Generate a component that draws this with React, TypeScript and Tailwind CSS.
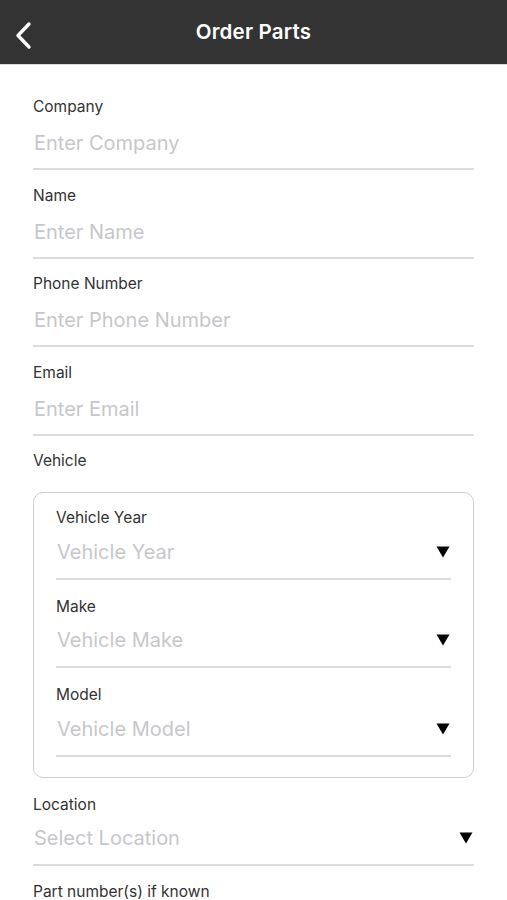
import { ReactNode } from "react";

const font = { fontFamily: "Inter, 'Noto Sans', sans-serif" };

export default function App() {
  return (
    <div className="min-h-[900px] w-full bg-white" style={font}>
      <header className="relative flex h-[65px] items-center justify-center border-b border-[#d9d9d9] bg-[#333333]">
        <button className="absolute left-[10px] top-[17px] p-1" aria-label="Back">
          <svg width="20" height="30" viewBox="0 0 20 30" fill="none">
            <path
              d="M15 3 L4 14.5 L15 26"
              stroke="white"
              strokeWidth="3.4"
              strokeLinecap="round"
              strokeLinejoin="round"
            />
          </svg>
        </button>
        <h1 className="text-[20.5px] font-semibold tracking-[0.2px] text-white">Order Parts</h1>
      </header>

      <main className="px-[33px] pt-[33px]">
        <Field label="Company" placeholder="Enter Company" />
        <Field label="Name" placeholder="Enter Name" />
        <Field label="Phone Number" placeholder="Enter Phone Number" />
        <Field label="Email" placeholder="Enter Email" />

        <Label>Vehicle</Label>
        <div className="mt-[22px] rounded-[10px] border border-[#cfcfcf] px-[22px] pt-[16px] pb-[2px]">
          <Field label="Vehicle Year" placeholder="Vehicle Year" select />
          <Field label="Make" placeholder="Vehicle Make" select />
          <Field label="Model" placeholder="Vehicle Model" select />
        </div>

        <div className="mt-[18px]">
          <Field label="Location" placeholder="Select Location" select />
        </div>
        <div className="-mt-[1.5px]">
          <Label>Part number(s) if known</Label>
        </div>
      </main>
    </div>
  );
}

function Label({ children }: { children: ReactNode }) {
  return <div className="h-[18px] text-[15.5px] leading-[18px] text-[#333333]">{children}</div>;
}

function Field({
  label,
  placeholder,
  select = false,
}: {
  label: string;
  placeholder: string;
  select?: boolean;
}) {
  return (
    <div className={select ? "mb-[18px]" : "mb-[16.5px]"}>
      <Label>{label}</Label>
      <div
        className={
          select
            ? "mt-[12.5px] flex h-[24px] items-center justify-between"
            : "mt-[15px] flex h-[24px] items-center justify-between"
        }
      >
        <span className="pl-[1px] text-[20px] leading-[24px] text-[#c7c7cb]">{placeholder}</span>
        {select && (
          <svg width="14" height="12" viewBox="0 0 14 12" className="mr-[1px]">
            <polygon points="0.5,0.5 13.5,0.5 7,11.5" fill="black" />
          </svg>
        )}
      </div>
      <div className={select ? "mt-[14px] h-[2px] bg-[#dcdcdc]" : "mt-[13px] h-[2px] bg-[#dcdcdc]"} />
    </div>
  );
}
